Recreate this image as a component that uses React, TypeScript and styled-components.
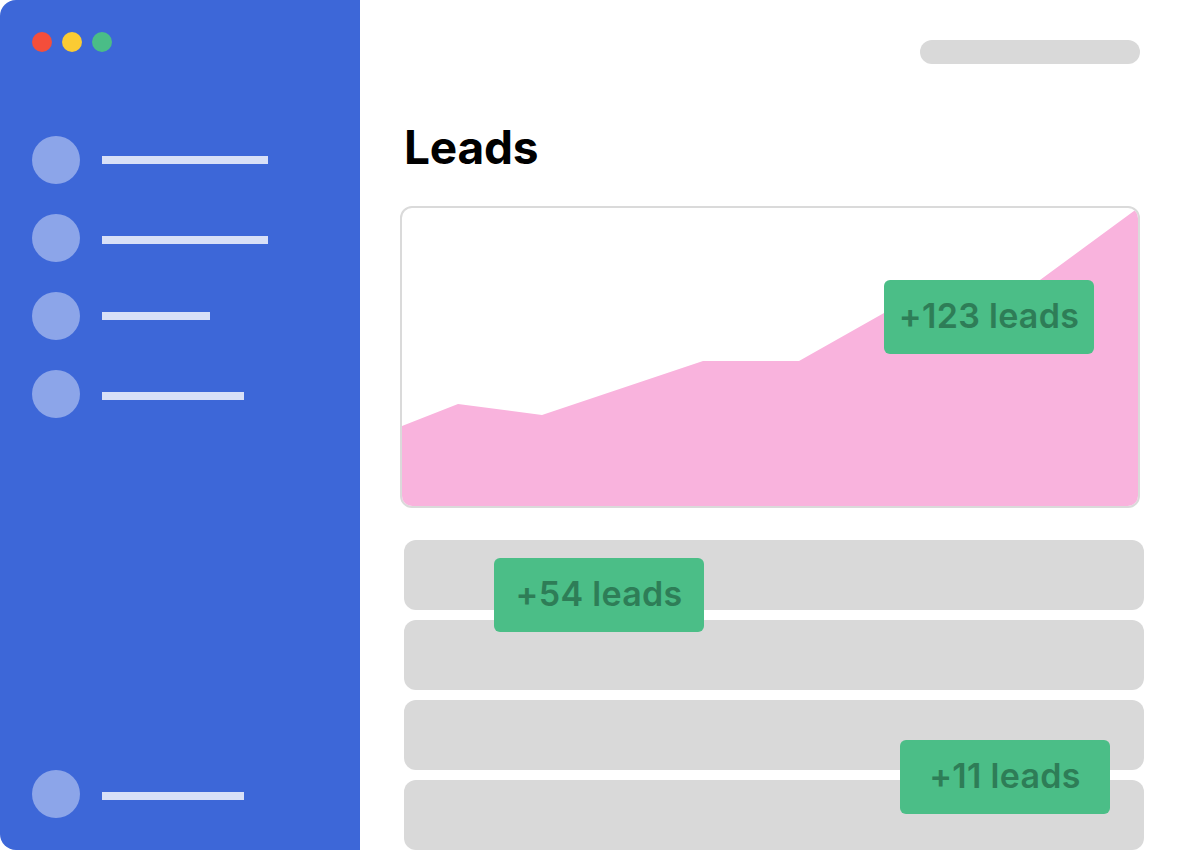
import React from "react";
import styled, { createGlobalStyle } from "styled-components";

const GlobalStyle = createGlobalStyle`
  html, body { margin: 0; padding: 0; background: #ffffff; }
  body { font-family: Inter, "Liberation Sans", Arial, sans-serif; }
  * { box-sizing: border-box; }
`;

const Window = styled.div`
  display: flex;
  width: 1180px;
  height: 850px;
  overflow: hidden;
  background: #ffffff;
`;

const Sidebar = styled.aside`
  width: 360px;
  flex: none;
  display: flex;
  flex-direction: column;
  padding: 32px;
  background: #3d67d8;
  border-radius: 16px 0 0 16px;
`;

const Lights = styled.div`
  display: flex;
  gap: 10px;
`;

const Light = styled.span<{ $color: string }>`
  width: 20px;
  height: 20px;
  border-radius: 50%;
  background: ${(p) => p.$color};
`;

const Nav = styled.nav`
  display: flex;
  flex-direction: column;
  gap: 30px;
  margin-top: 84px;
`;

const NavItem = styled.div`
  display: flex;
  align-items: center;
  gap: 22px;
  height: 48px;
`;

const Avatar = styled.span`
  width: 48px;
  height: 48px;
  border-radius: 50%;
  background: #8ca5e9;
  flex: none;
`;

const Bar = styled.span<{ $w: number; $low?: boolean }>`
  width: ${(p) => p.$w}px;
  height: 8px;
  margin-top: ${(p) => (p.$low ? 4 : 0)}px;
  background: #d8e0f7;
`;

const BottomItem = styled(NavItem)`
  margin-top: auto;
`;

const Main = styled.main`
  flex: 1;
  min-width: 0;
  display: flex;
  flex-direction: column;
  padding: 40px 40px 0 40px;
`;

const SearchPill = styled.div`
  align-self: flex-end;
  width: 220px;
  height: 24px;
  border-radius: 12px;
  background: #d9d9d9;
`;

const Title = styled.h1`
  margin: 55px 0 0 4px;
  font-family: Inter, "Liberation Sans", Arial, sans-serif;
  font-size: 46px;
  line-height: 56px;
  font-weight: 700;
  color: #000000;
  letter-spacing: -0.2px;
`;

const ChartCard = styled.div`
  position: relative;
  margin-top: 31px;
  width: 740px;
  height: 302px;
  flex: none;
  border: 2px solid #dadada;
  border-radius: 12px;
  overflow: hidden;
  background: #ffffff;
`;

const ChartSvg = styled.svg`
  display: block;
  width: 736px;
  height: 298px;
`;

const Badge = styled.div<{ $x: number; $y: number }>`
  position: absolute;
  left: ${(p) => p.$x}px;
  top: ${(p) => p.$y}px;
  width: 210px;
  height: 74px;
  padding-bottom: 4px;
  border-radius: 6px;
  background: #4bbe87;
  color: #2e7d57;
  display: flex;
  align-items: center;
  justify-content: center;
  font-family: Inter, "Liberation Sans", Arial, sans-serif;
  font-size: 34px;
  font-weight: 600;
  letter-spacing: 0.3px;
  white-space: nowrap;
`;

const Rows = styled.div`
  position: relative;
  display: flex;
  flex-direction: column;
  gap: 10px;
  margin: 32px 0 0 4px;
  width: 740px;
  flex: none;
`;

const Row = styled.div`
  height: 70px;
  border-radius: 12px;
  background: #d9d9d9;
  flex: none;
`;

const navBars = [
  { w: 166, low: false },
  { w: 166, low: true },
  { w: 108, low: false },
  { w: 142, low: true },
];

export default function App() {
  return (
    <>
      <GlobalStyle />
      <Window>
        <Sidebar>
          <Lights>
            <Light $color="#f44e3b" />
            <Light $color="#fbcb33" />
            <Light $color="#4abd87" />
          </Lights>
          <Nav>
            {navBars.map((b, i) => (
              <NavItem key={i}>
                <Avatar />
                <Bar $w={b.w} $low={b.low} />
              </NavItem>
            ))}
          </Nav>
          <BottomItem>
            <Avatar />
            <Bar $w={142} $low />
          </BottomItem>
        </Sidebar>
        <Main>
          <SearchPill />
          <Title>Leads</Title>
          <ChartCard>
            <ChartSvg viewBox="0 0 736 298" preserveAspectRatio="none">
              <polygon
                points="0,218 56,196 140,207 301,153 397,153 482,105 638,72 736,0 736,298 0,298"
                fill="#f9b3dd"
              />
            </ChartSvg>
            <Badge $x={482} $y={72}>+123 leads</Badge>
          </ChartCard>
          <Rows>
            <Row />
            <Row />
            <Row />
            <Row />
            <Badge $x={90} $y={18}>+54 leads</Badge>
            <Badge $x={496} $y={200}>+11 leads</Badge>
          </Rows>
        </Main>
      </Window>
    </>
  );
}
